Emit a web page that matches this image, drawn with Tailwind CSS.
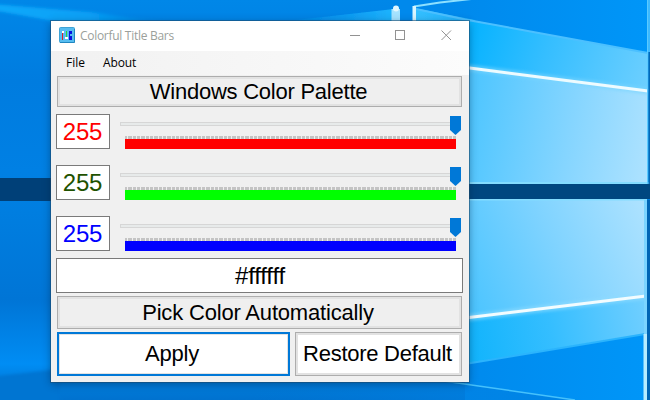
<!DOCTYPE html>
<html lang="en">
<head>
<meta charset="utf-8">
<title>Colorful Title Bars</title>
<script src="https://cdn.jsdelivr.net/npm/@tailwindcss/browser@4"></script>
</head>
<body class="relative h-[400px] w-[650px] overflow-hidden bg-[#0078d7] font-['Liberation_Sans',Arial,sans-serif] text-black">
<svg class="absolute inset-0" width="650" height="400" viewBox="0 0 650 400" aria-hidden="true">
  <defs>
    <linearGradient id="sky" x1="0" y1="0" x2="0" y2="1">
      <stop offset="0" stop-color="#0087e8"/><stop offset=".2" stop-color="#007cdf"/><stop offset=".43" stop-color="#0080e4"/>
      <stop offset=".53" stop-color="#007ee0"/><stop offset=".75" stop-color="#0075d6"/><stop offset=".91" stop-color="#008df4"/><stop offset=".96" stop-color="#007bda"/><stop offset="1" stop-color="#0072cf"/>
    </linearGradient>
    <linearGradient id="glassTop" x1="470" y1="40" x2="650" y2="100" gradientUnits="userSpaceOnUse">
      <stop offset="0" stop-color="#08b3ff"/><stop offset=".4" stop-color="#35beff"/><stop offset="1" stop-color="#70d0ff"/>
    </linearGradient>
    <linearGradient id="paneTop" x1="470" y1="120" x2="650" y2="150" gradientUnits="userSpaceOnUse">
      <stop offset="0" stop-color="#50c6ff"/><stop offset=".55" stop-color="#85d5ff"/><stop offset="1" stop-color="#ade2ff"/>
    </linearGradient>
    <linearGradient id="paneLow" x1="470" y1="300" x2="650" y2="220" gradientUnits="userSpaceOnUse">
      <stop offset="0" stop-color="#4dc5ff"/><stop offset=".5" stop-color="#7fd3ff"/><stop offset="1" stop-color="#ade2ff"/>
    </linearGradient>
    <linearGradient id="glassLow" x1="470" y1="345" x2="650" y2="310" gradientUnits="userSpaceOnUse">
      <stop offset="0" stop-color="#12b4fc"/><stop offset=".45" stop-color="#35beff"/><stop offset="1" stop-color="#72cfff"/>
    </linearGradient>
    <linearGradient id="deep" x1="450" y1="0" x2="650" y2="0" gradientUnits="userSpaceOnUse">
      <stop offset="0" stop-color="#0089ec"/><stop offset="1" stop-color="#0096f8"/>
    </linearGradient>
    <linearGradient id="streak" x1="0" y1="0" x2="180" y2="0" gradientUnits="userSpaceOnUse">
      <stop offset="0" stop-color="#10a8fa"/><stop offset=".5" stop-color="#08a0f6"/><stop offset="1" stop-color="#0088ea" stop-opacity="0"/>
    </linearGradient>
    <linearGradient id="beam" x1="260" y1="0" x2="400" y2="0" gradientUnits="userSpaceOnUse">
      <stop offset="0" stop-color="#0092f0" stop-opacity="0"/><stop offset="1" stop-color="#22b8ff"/>
    </linearGradient>
    <linearGradient id="wedge" x1="413" y1="0" x2="500" y2="0" gradientUnits="userSpaceOnUse">
      <stop offset="0" stop-color="#35c0ff"/><stop offset="1" stop-color="#10a8fb"/>
    </linearGradient>
    <linearGradient id="floor" x1="250" y1="0" x2="580" y2="0" gradientUnits="userSpaceOnUse">
      <stop offset="0" stop-color="#0079da" stop-opacity="0"/><stop offset="1" stop-color="#0084e6"/>
    </linearGradient>
    <filter id="soft" x="-10%" y="-50%" width="120%" height="200%"><feGaussianBlur stdDeviation="1.5"/></filter>
    <filter id="fine" x="-10%" y="-50%" width="120%" height="200%"><feGaussianBlur stdDeviation=".6"/></filter>
  </defs>
  <rect width="650" height="400" fill="url(#sky)"/>
  <polygon points="-8,4 90,12 180,24 70,24 -8,10" fill="url(#streak)" filter="url(#soft)"/>
  <polygon points="260,24 394,9 394,24" fill="url(#beam)" filter="url(#fine)"/>
  <rect x="-5" y="178" width="65" height="23" fill="#003f78" filter="url(#fine)"/>
  <polygon points="-10,377 60,369 60,410 -10,410" fill="#0075d2" filter="url(#soft)"/>
  <polygon points="400,24 400,-6 650,-6 650,56 465,24" fill="url(#deep)"/>
  <polygon points="414,8 475,20 475,28 414,28" fill="url(#wedge)" filter="url(#fine)"/>
  <polygon points="465,19 648,53 648,92 465,68" fill="url(#glassTop)"/>
  <polyline points="416,9 465,19.500 648,53" fill="none" stroke="#4cc0ff" stroke-width="2" filter="url(#fine)"/>
  <polygon points="465,68 648,91 648,184 465,184" fill="url(#paneTop)"/>
  <polyline points="462,67 648,91" fill="none" stroke="#79d5ff" stroke-width="7" opacity=".6" filter="url(#soft)"/>
  <polyline points="462,67 648,91" fill="none" stroke="#edfbff" stroke-width="3" filter="url(#fine)"/>
  <rect x="465" y="182" width="184" height="2" fill="#83dcff"/>
  <rect x="465" y="184" width="185" height="15" fill="#004780"/>
  <rect x="465" y="199" width="182" height="120" fill="url(#paneLow)"/>
  <polygon points="465,318 645,297 645,334 465,364" fill="url(#glassLow)"/>
  <polygon points="465,365 645,334 645,400 465,400" fill="url(#deep)"/>
  <polyline points="465,364 645,334" fill="none" stroke="#2cb4fd" stroke-width="2" filter="url(#fine)"/>
  <polyline points="465,318 646,296" fill="none" stroke="#8fdcff" stroke-width="7" opacity=".6" filter="url(#soft)"/>
  <polyline points="465,318 646,296" fill="none" stroke="#f2fcff" stroke-width="3" filter="url(#fine)"/>
  <rect x="465" y="199" width="182" height="1.500" fill="#83dcff"/>
  <polygon points="250,378 430,378 475,385 575,400 250,400" fill="url(#floor)"/>
  <polyline points="430,379 475,385.500 575,400" fill="none" stroke="#45c1fc" stroke-width="1.500" filter="url(#fine)"/>
  <rect x="647" width="1.500" height="184" fill="#5bcaff"/>
  <rect x="648.500" y="52" width="1.500" height="132" fill="#0069b8"/>
  <rect x="648" y="0" width="2" height="52" fill="#3cb9ff"/>
  <rect x="644" y="200" width="3" height="134" fill="#7bd4ff"/>
  <rect x="643.500" y="334" width="3.500" height="66" fill="#b6ecff"/>
  <rect x="647" y="200" width="3" height="200" fill="#0065b5"/>
  <polyline points="414,6.500 440,2.500 480,-2" fill="none" stroke="#8ce0ff" stroke-width="2" filter="url(#fine)"/>
  <rect x="412.500" y="6" width="3.500" height="18" fill="#d8f5ff"/>
  <rect x="391.500" y="9" width="8.500" height="15" fill="#a5e3ff" filter="url(#fine)"/>
  <circle cx="396" cy="8.500" r="3" fill="#e2f8ff" filter="url(#fine)"/>
</svg>

<main class="absolute left-[51px] top-[21px] flex h-[361px] w-[418px] flex-col bg-[#f0f0f0] shadow-[0_0_0_1px_rgba(30,75,110,0.55),0_2px_8px_rgba(0,30,60,0.45)]">
  <header class="flex h-[30px] shrink-0 items-center bg-white pl-2">
    <svg width="16" height="16" viewBox="0 0 16 16" class="mr-[5px] -mt-0.5" aria-hidden="true">
      <rect x=".5" y=".5" width="15" height="15" rx="1" fill="#55bcf0" stroke="#3fa3d6"/>
      <path d="M1 15.500h14.500V2" fill="none" stroke="#2086c0"/>
      <path d="M3.500 5v8" stroke="#d8202c"/>
      <path d="M7.500 4v8" stroke="#20d840"/>
      <path d="M10 4h3v3h-2v2h2v4h-3z" fill="#0712df"/>
      <path d="M3 4h2v2H3zM6 10h3v2H6z" fill="#fff"/>
    </svg>
    <span class="whitespace-nowrap font-['Open_Sans',sans-serif] text-[12px] leading-4 tracking-[-0.29px] text-[#9b9f9b]">Colorful Title Bars</span>
    <svg class="ml-auto mr-4 -mt-px" width="103" height="11" viewBox="0 0 103 11" fill="none" stroke="#929292" aria-hidden="true">
      <path d="M0 5.500h10"/><rect x="45.500" y=".5" width="9" height="9"/><path d="M91.500.5l9.500 9.500M101 .5L91.500 10"/>
    </svg>
  </header>
  <nav class="flex h-6 shrink-0 items-center gap-[18px] bg-linear-to-r from-[#f1f1f1] to-[#fcfcfc] pl-[15px] font-['Open_Sans',sans-serif] text-[12px] leading-4">
    <span>File</span><span class="tracking-[-0.15px]">About</span>
  </nav>
  <section class="flex flex-col pl-[5px] pr-[6px] pt-px">
    <button class="mx-px flex h-[31px] items-center justify-center border border-[#adadad] bg-[#efefef] pr-[2px] text-[22px] leading-none tracking-[-0.24px] shadow-[inset_0_0_0_2px_#e2e2e2]"><span>Windows Color Palette</span></button>

    <div class="mt-[7px] flex flex-col gap-4">
      <div class="flex h-[35px] gap-[10px]">
        <div class="flex w-[54px] items-center justify-center border border-[#7a7a7a] bg-white pr-px text-[24px] leading-none tracking-[-0.15px] text-[#f00]">255</div>
        <div class="relative w-[341px] pt-2">
          <div class="h-1 border border-[#d6d6d6] bg-[#e7eaea]"></div>
          <div class="ml-[5px] mt-[10px] h-[3px] w-[331px] bg-[repeating-linear-gradient(90deg,#c4c4c4_0_2px,#f0f0f0_2px_3px,#c4c4c4_3px_7px,#f0f0f0_7px_8px,#c4c4c4_8px_11px,#f0f0f0_11px_12px,#c4c4c4_12px_13px)]"></div>
          <div class="ml-[5px] h-[10px] w-[331px] bg-[#f00]"></div>
          <svg class="absolute right-0 top-[2px]" width="11" height="19"><path d="M0 0h11v14L5.500 19 0 14z" fill="#0078d7"/></svg>
        </div>
      </div>
      <div class="flex h-[35px] gap-[10px]">
        <div class="flex w-[54px] items-center justify-center border border-[#7a7a7a] bg-white pr-px text-[24px] leading-none tracking-[-0.15px] text-[#1f5200]">255</div>
        <div class="relative w-[341px] pt-2">
          <div class="h-1 border border-[#d6d6d6] bg-[#e7eaea]"></div>
          <div class="ml-[5px] mt-[10px] h-[3px] w-[331px] bg-[repeating-linear-gradient(90deg,#c4c4c4_0_2px,#f0f0f0_2px_3px,#c4c4c4_3px_7px,#f0f0f0_7px_8px,#c4c4c4_8px_11px,#f0f0f0_11px_12px,#c4c4c4_12px_13px)]"></div>
          <div class="ml-[5px] h-[10px] w-[331px] bg-[#0f0]"></div>
          <svg class="absolute right-0 top-[2px]" width="11" height="19"><path d="M0 0h11v14L5.500 19 0 14z" fill="#0078d7"/></svg>
        </div>
      </div>
      <div class="flex h-[35px] gap-[10px]">
        <div class="flex w-[54px] items-center justify-center border border-[#7a7a7a] bg-white pr-px text-[24px] leading-none tracking-[-0.15px] text-[#00f]">255</div>
        <div class="relative w-[341px] pt-2">
          <div class="h-1 border border-[#d6d6d6] bg-[#e7eaea]"></div>
          <div class="ml-[5px] mt-[10px] h-[3px] w-[331px] bg-[repeating-linear-gradient(90deg,#c4c4c4_0_2px,#f0f0f0_2px_3px,#c4c4c4_3px_7px,#f0f0f0_7px_8px,#c4c4c4_8px_11px,#f0f0f0_11px_12px,#c4c4c4_12px_13px)]"></div>
          <div class="ml-[5px] h-[10px] w-[331px] bg-[#00f]"></div>
          <svg class="absolute right-0 top-[2px]" width="11" height="19"><path d="M0 0h11v14L5.500 19 0 14z" fill="#0078d7"/></svg>
        </div>
      </div>
    </div>

    <div class="mt-[7px] flex h-[35px] items-center justify-center border border-[#7a7a7a] bg-white pl-px text-[24px] leading-none tracking-[-0.2px]">#ffffff</div>
    <button class="mx-px mt-[3px] flex h-[33px] items-center justify-center border border-[#adadad] bg-[#efefef] pr-[3px] pt-px text-[22px] leading-none tracking-[-0.18px] shadow-[inset_0_0_0_2px_#e2e2e2]"><span>Pick Color Automatically</span></button>
    <div class="mx-px mt-[3px] flex h-11 gap-[5px]">
      <button class="flex w-[233px] items-center justify-center border-2 border-[#0078d7] bg-white text-[22px] leading-none tracking-[-0.2px] shadow-[inset_0_0_0_1px_#e2e2e2]"><span class="mr-[3px]">Apply</span></button>
      <button class="flex w-[167px] items-center justify-center whitespace-nowrap border border-[#adadad] bg-white pr-[2px] text-[22px] leading-none tracking-[-0.27px] shadow-[inset_0_0_0_2px_#e2e2e2]"><span>Restore Default</span></button>
    </div>
  </section>
</main>
</body>
</html>
